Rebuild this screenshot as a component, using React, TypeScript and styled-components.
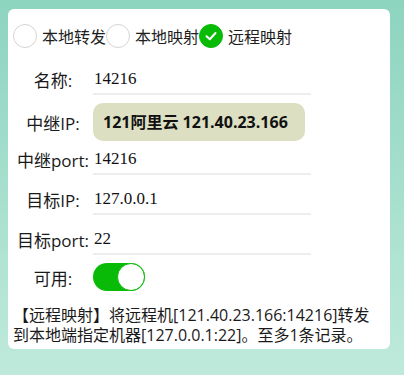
import React from 'react';
import styled, { createGlobalStyle } from 'styled-components';

const Global = createGlobalStyle`
  html, body { margin: 0; padding: 0; }
  html { background: linear-gradient(180deg, #8dd4bf 0%, #bfeadb 100%); min-height: 100%; }
  body {
    min-height: 375px;
    font-family: "Open Sans", "Noto Sans CJK SC", sans-serif;
    color: #1e1e1e;
  }
`;

const Card = styled.div`
  box-sizing: border-box;
  margin: 9px 0 0 8px;
  width: 382px;
  height: 340px;
  background: #ffffff;
  border-radius: 6px;
  padding: 5px;
`;

const RadioGroup = styled.div`
  display: flex;
  align-items: center;
  height: 44px;
`;

const RadioItem = styled.label`
  display: flex;
  align-items: center;
  cursor: pointer;
`;

const Circle = styled.span<{ $checked?: boolean }>`
  box-sizing: border-box;
  width: 24px;
  height: 24px;
  border-radius: 50%;
  border: 1px solid ${(p) => (p.$checked ? '#09bb07' : '#d4d4d4')};
  background: ${(p) => (p.$checked ? '#09bb07' : '#ffffff')};
  display: flex;
  align-items: center;
  justify-content: center;
`;

const RadioText = styled.span`
  margin-left: 5px;
  font-size: 16px;
  line-height: 20px;
  font-family: "Noto Sans CJK SC", sans-serif;
`;

const FormRow = styled.div<{ $mt: number }>`
  display: flex;
  align-items: center;
  margin-top: ${(p) => p.$mt}px;
`;

const Label = styled.span`
  width: 80px;
  text-align: center;
  font-size: 17px;
  white-space: nowrap;
  color: #1a1a1a;
`;

const TextInput = styled.input`
  box-sizing: border-box;
  width: 218px;
  height: 32px;
  border: none;
  border-bottom: 2px solid #eeeeee;
  padding: 2px 1px 0;
  margin: 0;
  outline: none;
  background: transparent;
  font-family: "Liberation Serif", serif;
  font-size: 17px;
  color: #111;
`;

const Select = styled.select`
  appearance: none;
  box-sizing: border-box;
  width: 212px;
  height: 38px;
  border: none;
  border-radius: 10px;
  background: #dcdfc1;
  padding: 0 10px;
  margin: 0;
  font-family: "Open Sans", "Noto Sans CJK SC", sans-serif;
  font-weight: 700;
  font-size: 16px;
  color: #111;
  outline: none;
`;

const Toggle = styled.span<{ $on: boolean }>`
  position: relative;
  box-sizing: border-box;
  display: block;
  width: 52px;
  height: 28px;
  border-radius: 14px;
  background: ${(p) => (p.$on ? '#09bb07' : '#e5e5e5')};
`;

const Knob = styled.span<{ $on: boolean }>`
  position: absolute;
  box-sizing: border-box;
  top: 0;
  ${(p) => (p.$on ? 'right: 0;' : 'left: 0;')}
  width: 28px;
  height: 28px;
  border-radius: 50%;
  background: #ffffff;
  border: 1px solid #09bb07;
`;

const Description = styled.p`
  margin: 14px 0 0;
  font-size: 16px;
  line-height: 20px;
  color: #1a1a1a;
`;

const Check = () => (
  <svg width="14" height="14" viewBox="0 0 14 14" fill="none">
    <path d="M2.5 7.2 L5.8 10.2 L11.5 4" stroke="#fff" strokeWidth="2" strokeLinecap="round" strokeLinejoin="round" />
  </svg>
);

const modes = ['本地转发', '本地映射', '远程映射'];

export default function App() {
  const mode = 2;
  return (
    <>
      <Global />
      <Card>
        <RadioGroup>
          {modes.map((m, i) => (
            <RadioItem key={m}>
              <Circle $checked={i === mode}>{i === mode && <Check />}</Circle>
              <RadioText>{m}</RadioText>
            </RadioItem>
          ))}
        </RadioGroup>
        <FormRow $mt={5}>
          <Label>名称:</Label>
          <TextInput defaultValue="14216" />
        </FormRow>
        <FormRow $mt={8}>
          <Label>中继IP:</Label>
          <Select defaultValue="a">
            <option value="a">121阿里云 121.40.23.166</option>
          </Select>
        </FormRow>
        <FormRow $mt={2}>
          <Label>中继port:</Label>
          <TextInput defaultValue="14216" />
        </FormRow>
        <FormRow $mt={8}>
          <Label>目标IP:</Label>
          <TextInput defaultValue="127.0.0.1" />
        </FormRow>
        <FormRow $mt={8}>
          <Label>目标port:</Label>
          <TextInput defaultValue="22" />
        </FormRow>
        <FormRow $mt={8}>
          <Label>可用:</Label>
          <Toggle $on>
            <Knob $on />
          </Toggle>
        </FormRow>
        <Description>
          【远程映射】将远程机[121.40.23.166:14216]转发到本地端指定机器[127.0.0.1:22]。至多1条记录。
        </Description>
      </Card>
    </>
  );
}
